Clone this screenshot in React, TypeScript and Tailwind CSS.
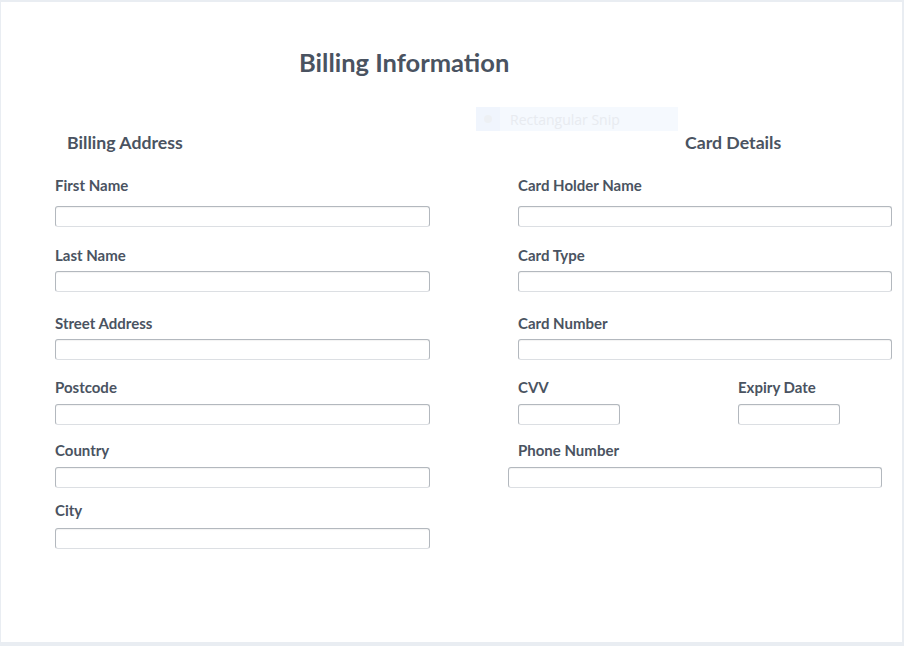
import React from 'react'

function Field({ label }: { label: string }) {
  return <label className="block h-[17px] pt-[1px] text-[15px] leading-[17px] font-bold">{label}</label>
}

function Input({ className }: { className: string }) {
  return (
    <div
      className={
        'h-[21px] rounded-[3px] border border-[#b3b8be] border-b-[#dcdfe3] bg-white shadow-[inset_0_1px_1px_rgba(0,0,0,0.05)] ' +
        className
      }
    />
  )
}

export default function App() {
  return (
    <div
      className="relative w-[904px] h-[646px] bg-[#e9edf2] pt-[2px] pl-[1px] pr-[2px] pb-[4px] text-[#4a5361]"
      style={{ fontFamily: 'Lato, "Open Sans", sans-serif' }}
    >
      <div className="h-full bg-white">
        <h1 className="pt-[45px] pl-[298px] text-[25.5px] leading-[30px] font-bold">Billing Information</h1>

        {/* section headings */}
        <div className="mt-[55px] grid grid-cols-[462px_1fr] h-[22px] text-[17.7px] leading-[22px] font-bold">
          <h2 className="pl-[66px]">Billing Address</h2>
          <h2 className="pl-[222px]">Card Details</h2>
        </div>

        <div className="grid grid-cols-[463px_1fr] pl-[54px]">
          {/* row 1 */}
          <div className="pt-[22px] w-[375px]">
            <Field label="First Name" />
            <Input className="mt-[13px]" />
          </div>
          <div className="pt-[22px] w-[374px]">
            <Field label="Card Holder Name" />
            <Input className="mt-[13px]" />
          </div>

          {/* row 2 */}
          <div className="pt-[19px] w-[375px]">
            <Field label="Last Name" />
            <Input className="mt-[8px]" />
          </div>
          <div className="pt-[19px] w-[374px]">
            <Field label="Card Type" />
            <Input className="mt-[8px]" />
          </div>

          {/* row 3 */}
          <div className="pt-[22px] w-[375px]">
            <Field label="Street Address" />
            <Input className="mt-[8px]" />
          </div>
          <div className="pt-[22px] w-[374px]">
            <Field label="Card Number" />
            <Input className="mt-[8px]" />
          </div>

          {/* row 4 */}
          <div className="pt-[18px] w-[375px]">
            <Field label="Postcode" />
            <Input className="mt-[9px]" />
          </div>
          <div className="pt-[18px] flex gap-[118px]">
            <div className="w-[102px]">
              <Field label="CVV" />
              <Input className="mt-[9px]" />
            </div>
            <div className="w-[102px]">
              <Field label="Expiry Date" />
              <Input className="mt-[9px]" />
            </div>
          </div>

          {/* row 5 */}
          <div className="pt-[16px] w-[375px]">
            <Field label="Country" />
            <Input className="mt-[9px]" />
          </div>
          <div className="pt-[16px]">
            <Field label="Phone Number" />
            <Input className="mt-[9px] w-[374px] -ml-[10px]" />
          </div>

          {/* row 6 */}
          <div className="pt-[13px] w-[375px]">
            <Field label="City" />
            <Input className="mt-[10px]" />
          </div>
          <div />
        </div>
      </div>

      {/* faint snipping-tool overlay */}
      <div className="absolute left-[476px] top-[107px] w-[202px] h-[24px] bg-[#f5f9fe] flex items-center text-[14px] text-[#e8ebf0]">
        <div className="w-[24px] h-full bg-[#f0f5fd] flex items-center justify-center">
          <span className="w-[8px] h-[8px] rounded-full bg-[#edf0f4]" />
        </div>
        <span className="ml-[10px]" style={{ fontFamily: '"Open Sans", sans-serif' }}>Rectangular Snip</span>
      </div>
    </div>
  )
}
